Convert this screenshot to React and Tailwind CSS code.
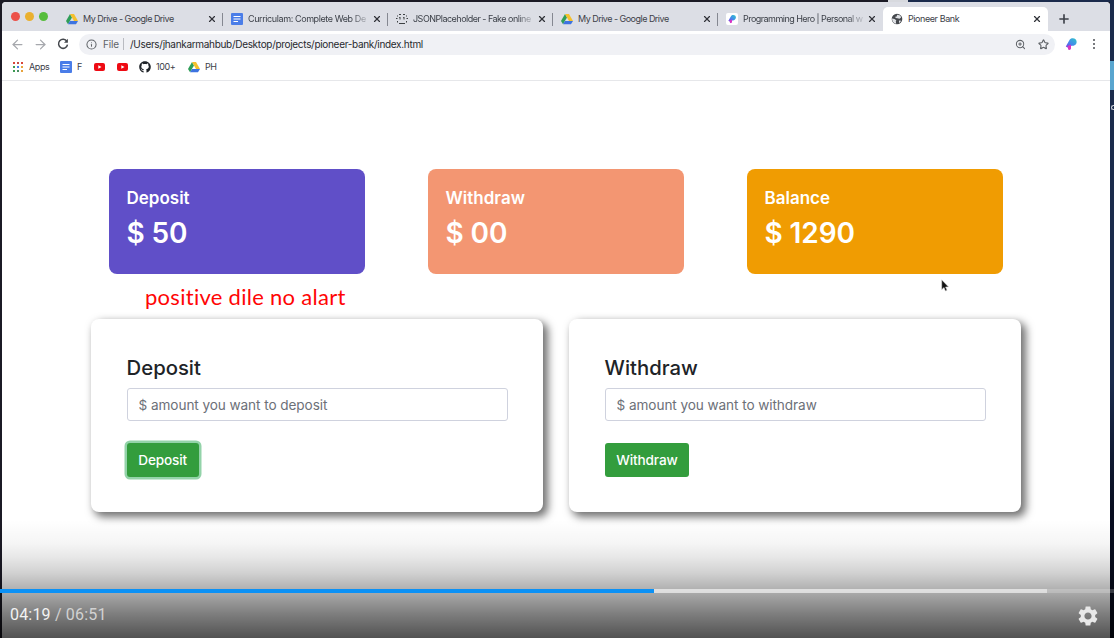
import React from "react";
import { MdSettings } from "react-icons/md";
import { FaGithub } from "react-icons/fa";
import { ArrowLeft, ArrowRight, X, Plus, Info, ZoomIn, Star } from "lucide-react";

function Drive() {
  return (
    <svg className="block size-3 shrink-0" viewBox="0 0 24 22">
      <path d="M8 1 0 15l4 6.5L12 8z" fill="#2f9e58" />
      <path d="M8 1h8l8 14h-8z" fill="#f5c02c" />
      <path d="M8 15h16l-4 6.500H4z" fill="#3d73e0" />
    </svg>
  );
}

function Doc() {
  return (
    <svg className="block size-3 shrink-0" viewBox="0 0 12 12">
      <rect width="12" height="12" rx="1" fill="#4a7de8" />
      <path d="M2.500 3.500h7M2.500 6h7M2.500 8.500h4.500" stroke="#fff" strokeWidth="1.200" />
    </svg>
  );
}

function Json() {
  return (
    <svg className="block size-3 shrink-0" viewBox="0 0 12 12" fill="none" stroke="#3c4043" strokeWidth="1">
      <path d="M1.500 3.500V2.500M3 1.500h2M7 1.500h2M10.500 2.500v1M1.500 8v1.500M10.500 8v1.500M3 10.500h6M0 5.500h1.500M10.500 5.500H12M4 4v2.500M3.300 4.500H4M8 4v2.500M7.300 4.500H8" />
    </svg>
  );
}

function Hero() {
  return (
    <svg className="block size-3 shrink-0" viewBox="0 0 12 12">
      <defs>
        <linearGradient id="heroBlue" x1="1" y1="0" x2="0" y2="1">
          <stop offset="0" stopColor="#2fc6c8" />
          <stop offset="0.550" stopColor="#4489ec" />
          <stop offset="1" stopColor="#7a3fe0" />
        </linearGradient>
      </defs>
      <path d="M4.500 2C5.500 0 9-.2 10.800 1.500c1.500 2 .9 4.800-1.300 5.800-1.300.7-2.500.5-3.500.7L2.500 9.500.800 8.500z" fill="url(#heroBlue)" />
      <path d="M2.500 8 6 6.800v3.500c0 2-3 2.400-3 .2z" fill="#d835c4" />
    </svg>
  );
}

function HeroTile() {
  return (
    <span className="flex size-3 shrink-0 items-center justify-center rounded-[2px] bg-white">
      <span className="scale-[0.7]">
        <Hero />
      </span>
    </span>
  );
}

function Globe() {
  return (
    <svg className="block size-3 shrink-0" viewBox="0 0 12 12">
      <circle cx="6" cy="6" r="5.300" fill="#45484d" />
      <path d="M1 5.500 3.500 6l1.800 1.300-.5 1.200.4 2.300C2.500 10.500 1 8 1 5.500zM6 1.800l3.400.8.700 2-1.600 1.200-2-.6-1.800-.2L4.200 3.800l1.600-.4zM8 7.500l2.300.2L8 10.300z" fill="#dfe1e5" />
    </svg>
  );
}

function Youtube() {
  return (
    <svg className="block h-2 w-[11px] shrink-0" viewBox="0 0 11 8">
      <rect width="11" height="8" rx="2" fill="#ee0a13" />
      <path d="m4.300 2.200 3.200 1.800-3.200 1.800z" fill="#fff" />
    </svg>
  );
}

function AppsGrid() {
  const colors = [
    "bg-[#d9453a]", "bg-[#c34c45]", "bg-[#d9453a]",
    "bg-[#3c9a52]", "bg-[#4a7de8]", "bg-[#e8a33c]",
    "bg-[#3c9a52]", "bg-[#4a8f62]", "bg-[#e8a33c]",
  ];
  return (
    <span className="grid w-[10px] grid-cols-3 gap-[2px]">
      {colors.map((c, i) => (
        <span key={i} className={`size-[2px] ${c}`} />
      ))}
    </span>
  );
}

const tabs = [
  { icon: <Drive />, title: "My Drive - Google Drive", spacing: "tracking-[-0.058em]" },
  { icon: <Doc />, title: "Curriculam: Complete Web De", spacing: "tracking-[-0.045em]", faded: true },
  { icon: <Json />, title: "JSONPlaceholder - Fake online", spacing: "tracking-[-0.057em]", faded: true },
  { icon: <Drive />, title: "My Drive - Google Drive", spacing: "tracking-[-0.058em]" },
  { icon: <HeroTile />, title: "Programming Hero | Personal w", spacing: "tracking-[-0.060em]", faded: true },
  { icon: <Globe />, title: "Pioneer Bank", spacing: "tracking-[-0.047em]", active: true },
];

function Tab({ icon, title, spacing, faded, active, divider }) {
  return (
    <div
      className={`flex h-6 w-[165px] shrink-0 items-center pl-2 pr-[7px] ${
        active ? "rounded-t-[5px] bg-white" : divider ? "bg-[linear-gradient(#858891,#858891)] bg-[length:1px_13px] bg-[position:100%_6px] bg-no-repeat" : ""
      }`}
    >
      {icon}
      <span
        className={`ml-[5px] w-[120px] shrink-0 whitespace-nowrap text-[9px] leading-3 text-[#3c4048] ${spacing} ${
          faded ? "[mask-image:linear-gradient(to_right,black_86%,transparent_103%)]" : ""
        }`}
      >
        {title}
      </span>
      <X className="ml-1 size-[10px] shrink-0 text-[#303238]" strokeWidth={2.800} />
    </div>
  );
}

function TabStrip() {
  return (
    <div className="flex h-[29px] items-end bg-[#dcdee5]">
      <div className="flex h-full w-14 shrink-0 items-start gap-[5px] pl-[9px] pt-[10px]">
        <span className="size-[9px] rounded-full bg-[#ec5149]" />
        <span className="size-[9px] rounded-full bg-[#eab02f]" />
        <span className="size-[9px] rounded-full bg-[#56bd3c]" />
      </div>
      {tabs.map((t, i) => (
        <Tab key={i} {...t} divider={i < 4} />
      ))}
      <Plus className="mb-[5px] ml-[9px] size-[14px] text-[#3c4048]" strokeWidth={2.800} />
    </div>
  );
}

function Toolbar() {
  return (
    <div className="flex h-[26px] items-center pl-2 text-[#5f6368]">
      <ArrowLeft className="size-[15px] text-[#a6a8ad]" strokeWidth={2} />
      <ArrowRight className="ml-2 size-[15px] text-[#a6a8ad]" strokeWidth={2} />
      <svg className="ml-[9px] block size-3" viewBox="0 0 12 12" fill="none" stroke="#44474c" strokeWidth="1.500">
        <path d="M9.900 3.500A4.500 4.500 0 1 0 10.500 6.600" />
        <path d="M10.900.800v4H7z" fill="#44474c" stroke="none" />
      </svg>
      <div className="ml-[10px] flex h-[21px] w-[976px] items-center rounded-full bg-[#f0f1f5] pl-[7px]">
        <Info className="size-[11px]" strokeWidth={2.200} />
        <span className="ml-[6px] w-4 whitespace-nowrap text-[10px] tracking-[-0.020em]">File</span>
        <span className="ml-1 h-3 w-px bg-[#b9bbc1]" />
        <span className="ml-[6px] whitespace-nowrap text-[10px] tracking-[-0.310px] text-[#27292e]">
          /Users/jhankarmahbub/Desktop/projects/pioneer-bank/index.html
        </span>
        <ZoomIn className="ml-auto size-[11px]" strokeWidth={2.200} />
        <Star className="ml-3 mr-[6px] size-[11px]" strokeWidth={2.500} />
      </div>
      <span className="ml-[10px]">
        <Hero />
      </span>
      <span className="ml-4 flex flex-col gap-[2px]">
        <span className="size-[2px] rounded-full bg-[#4c4f54]" />
        <span className="size-[2px] rounded-full bg-[#4c4f54]" />
        <span className="size-[2px] rounded-full bg-[#4c4f54]" />
      </span>
    </div>
  );
}

function Bookmarks() {
  return (
    <div className="flex h-6 items-center border-b border-[#e6e7ea] pb-[3px] pl-[11px] text-[9px] tracking-[-0.400px] text-[#3c4048]">
      <AppsGrid />
      <span className="ml-[6px] w-[31px]">Apps</span>
      <Doc />
      <span className="ml-[5px] w-[17px]">F</span>
      <Youtube />
      <span className="ml-3"><Youtube /></span>
      <FaGithub className="ml-[11px] size-3 text-[#1f2328]" />
      <span className="ml-[5px] w-8">100+</span>
      <Drive />
      <span className="ml-[5px]">PH</span>
    </div>
  );
}

const totals = [
  { name: "Deposit", amount: "50", color: "bg-[#604fc8]" },
  { name: "Withdraw", amount: "00", color: "bg-[#f39672]" },
  { name: "Balance", amount: "1290", color: "bg-[#f09c02]" },
];

const forms = [
  { name: "Deposit", hint: "$ amount you want to deposit", focused: true },
  { name: "Withdraw", hint: "$ amount you want to withdraw" },
];

function BankPage() {
  return (
    <main className="pt-[87.500px]">
      <section className="ml-[106.500px] flex w-[894.500px] justify-between">
        {totals.map((t) => (
          <div key={t.name} className={`h-[105.500px] w-[256.500px] rounded-[8px] pl-[18px] pt-[18.500px] text-white ${t.color}`}>
            <h2 className="text-[17px] font-semibold leading-[22px]">{t.name}</h2>
            <p className="mt-[6px] text-[28px] font-semibold leading-9 tracking-[-0.100px]">$ {t.amount}</p>
          </div>
        ))}
      </section>
      <p className="ml-[143px] mt-[9px] h-7 whitespace-nowrap font-[Lato,sans-serif] text-[22px] leading-7 tracking-[0.280px] text-[#ff0505]">
        positive dile no alart
      </p>
      <section className="ml-[89px] mt-2 flex gap-[26px]">
        {forms.map((f) => (
          <div key={f.name} className="h-[193px] w-[452px] rounded-[8px] bg-white pl-[35.600px] pt-[35px] shadow-[4px_4px_8px_1px_rgba(0,0,0,0.560)]">
            <h3 className="h-[34px] text-[20.300px] font-medium leading-[27px] text-[#202327]">{f.name}</h3>
            <input
              className="block h-[33px] w-[381px] rounded-[3px] border border-[#cfd2de] bg-white px-[11px] text-[13.600px] tracking-[-0.080px] outline-none placeholder:text-[#6c7078]"
              placeholder={f.hint}
            />
            <button
              className={`mt-[21.500px] h-[34.500px] rounded-[3px] bg-[#339d3d] px-[11.600px] pt-px text-[13.600px] font-medium tracking-[-0.120px] text-white ${
                f.focused ? "shadow-[0_0_0_2.500px_#93d3a9]" : ""
              }`}
            >
              {f.name}
            </button>
          </div>
        ))}
      </section>
    </main>
  );
}

function PlayerControls() {
  return (
    <div className="absolute inset-x-0 bottom-0 h-[118px] bg-[linear-gradient(to_bottom,rgba(0,0,0,0)_0%,rgba(0,0,0,0.040)_20%,rgba(0,0,0,0.090)_31%,rgba(0,0,0,0.180)_45%,rgba(0,0,0,0.300)_58%,rgba(0,0,0,0.500)_79%,rgba(0,0,0,0.680)_100%)] pt-[69px] font-[Roboto,sans-serif]">
      <div className="flex h-1 bg-white/20">
        <div className="w-[654px] bg-[#0b91f5]" />
        <div className="w-[393px] bg-white/50" />
      </div>
      <div className="flex h-[43px] items-center justify-between pl-[10px] pr-[14px]">
        <p className="whitespace-pre pt-px text-[16px] tracking-[0.180px] text-[#d2d2d2]">
          <span className="text-[#f2f2f2]">04:19</span> / 06:51
        </p>
        <MdSettings className="mt-[3px] size-6 text-[#e8e8e8]" />
      </div>
    </div>
  );
}

function Pointer() {
  return (
    <svg className="absolute left-[941px] top-[279px] h-[14px] w-[9px]" viewBox="0 0 9 14">
      <path d="M.700.800v10l2.200-2.200 1.500 3.500 1.700-.8-1.500-3.300h3z" fill="#111" stroke="#ddd" strokeWidth=".6" />
    </svg>
  );
}

export default function App() {
  return (
    <div className="relative flex h-[638px] w-[1114px] overflow-hidden bg-[#1b1a25] pl-[2px] pt-[2px] font-[Inter,sans-serif]">
      <div className="h-full w-[1108px] shrink-0 overflow-hidden rounded-t-[4px] bg-white">
        <TabStrip />
        <Toolbar />
        <Bookmarks />
        <BankPage />
      </div>
      <aside className="-mt-[2px] flex h-[638px] w-1 flex-col bg-[linear-gradient(#1b2b4c,#1b2b4c_60%,#080d1f_80%)] pt-[61px]">
        <div className="h-[29px] bg-[#58a5cf]" />
        <div className="mt-[15px] h-[5px] w-[3px] self-end rounded-l-full border border-r-0 border-[#c9ced8]" />
      </aside>
      <div className="absolute left-[888px] top-0 h-[2px] w-5 bg-[#d7d9de]" />
      <div className="absolute left-[908px] top-0 h-[2px] w-[206px] bg-[#1b2b4c]" />
      <Pointer />
      <PlayerControls />
    </div>
  );
}
